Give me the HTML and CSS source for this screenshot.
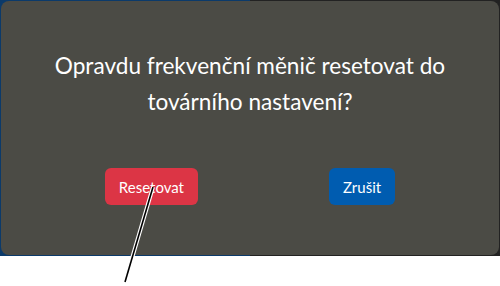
FILE: index.html
```html
<!DOCTYPE html>
<html lang="cs">
<head>
  <meta charset="UTF-8" />
  <meta name="viewport" content="width=device-width, initial-scale=1.0" />
  <title>Reset</title>
  <link rel="stylesheet" href="styles.css">
</head>
<body>
  <div class="backdrop">
    <div class="dialog">
      <p class="question">Opravdu frekvenční měnič resetovat do továrního nastavení?</p>
      <div class="actions">
        <button class="btn btn-danger">Resetovat</button>
        <button class="btn btn-primary">Zrušit</button>
      </div>
    </div>
  </div>
  <svg class="pointer" width="500" height="286" viewBox="0 0 500 286">
    <line x1="153" y1="187" x2="125" y2="282" stroke="#fff" stroke-width="4" />
    <line x1="153" y1="187" x2="125" y2="282" stroke="#000" stroke-width="1.6" />
  </svg>
</body>
</html>
```

FILE: styles.css
```css
body {
  margin: 0;
  padding: 0;
  background: #ffffff;
  font-family: Lato, "Liberation Sans", sans-serif;
  width: 500px;
  height: 286px;
  overflow: hidden;
  position: relative;
}
.backdrop {
  height: 256px;
  padding: 1px 1px 0 1px;
  box-sizing: border-box;
  background: linear-gradient(to right, #0b3a6a 0, #0b3a6a 50%, #222222 50%);
}
.dialog {
  height: 254px;
  background: #4b4b45;
  border-radius: 8px;
  box-sizing: border-box;
  padding-top: 47px;
}
.question {
  margin: 0 30px;
  color: #ffffff;
  font-size: 22.6px;
  line-height: 36px;
  text-align: center;
}
.actions {
  display: flex;
  justify-content: center;
  gap: 131px;
  margin-top: 48px;
}
.btn {
  height: 37px;
  padding: 0 14px;
  border: none;
  border-radius: 6px;
  color: #ffffff;
  font-family: inherit;
  font-size: 15px;
}
.btn-danger {
  background: #dc3545;
}
.btn-primary {
  background: #005cb0;
}
.pointer {
  position: absolute;
  left: 0;
  top: 0;
}
```
